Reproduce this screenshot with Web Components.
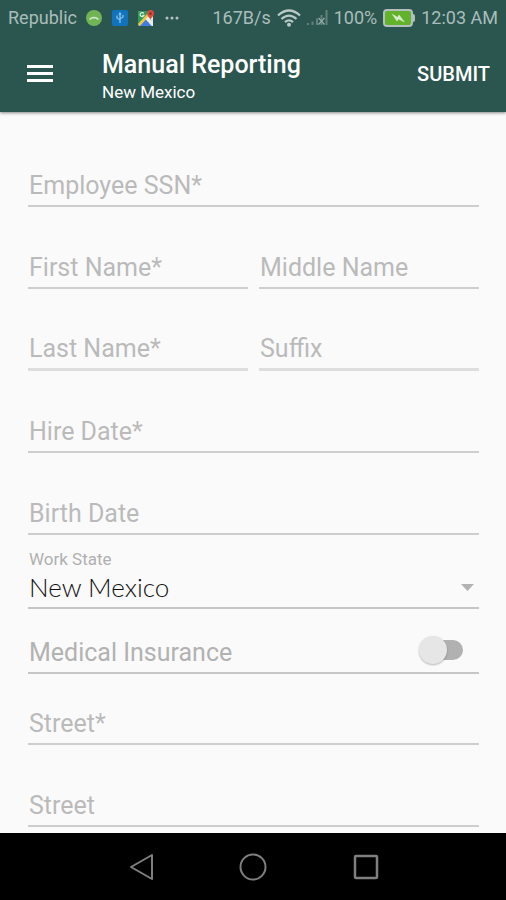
<!DOCTYPE html>
<html lang="en">
<head>
<meta charset="utf-8">
<meta name="viewport" content="width=device-width, initial-scale=1">
<title>Manual Reporting</title>
<style>
  body { margin: 0; background: #fafafa; font-family: Roboto, "Liberation Sans", sans-serif; }
</style>
</head>
<body>
<report-screen></report-screen>
<script>
const define = (name, html, setup) => {
  const template = document.createElement('template');
  template.innerHTML = html;
  customElements.define(name, class extends HTMLElement {
    constructor() {
      super();
      this.attachShadow({ mode: 'open' }).append(template.content.cloneNode(true));
    }
    connectedCallback() { if (setup) setup(this, this.shadowRoot); }
  });
};

define('status-bar', `
<style>
  :host { display: flex; justify-content: space-between; align-items: center; height: 36px;
    padding: 0 8px; color: #aabdba; font-size: 18px; line-height: 24px; white-space: nowrap; }
  .group { display: flex; align-items: center; gap: 9px; }
  .right { gap: 6px; }
  svg { display: block; flex: none; }
</style>
<div class="group">
  <span>Republic</span>
  <svg width="16" height="16" viewBox="0 0 16 16" aria-hidden="true">
    <circle cx="8" cy="8" r="8" fill="#70b456"/>
    <path d="M3 9.500C4.500 5.800 11.500 5.800 13 9.500L11 9.800 10 8.400H6L5 9.800Z" fill="#d5ead0"/>
  </svg>
  <svg width="18" height="16" viewBox="0 0 18 16" aria-hidden="true">
    <rect x="1" width="16" height="16" rx="2" fill="#0f73bd"/>
    <path d="M9 3.500V13M6 5.500V8L9 10M12 5V7L9 9M7.800 4.500L9 3 10.200 4.500" fill="none" stroke="#86bde5" stroke-width="1.400"/>
  </svg>
  <svg width="17" height="17" viewBox="0 0 17 17" aria-hidden="true">
    <rect y="1" width="15" height="15" rx="2" fill="#e4e6e2"/>
    <path d="M0 3Q0 1 2 1H12L1 15Q0 15 0 13Z" fill="#2f9b59"/>
    <path d="M1 16L7.500 9 14 16Z" fill="#3f7de0"/>
    <path d="M0 14L9 4 11 6 2 16Z" fill="#f0c843"/>
    <path d="M7.500 9L9.500 7 15 13V16H14Z" fill="#eceeec"/>
    <path d="M5.800 3.500A2 2 0 1 0 6 5.300H4.300" fill="none" stroke="#e3f0e6" stroke-width="1.200"/>
    <path d="M12.500 10.500C12.500 7.800 9 6.500 9 3.600A3.500 3.500 0 0 1 16 3.600C16 6.500 12.500 7.800 12.500 10.500Z" fill="#d94b3f"/>
    <circle cx="12.500" cy="3.600" r="1.300" fill="#8c2c26"/>
  </svg>
  <svg width="16" height="4" viewBox="0 0 16 4" aria-hidden="true" fill="#b3c4c1">
    <circle cx="3" cy="2" r="1.500"/><circle cx="8" cy="2" r="1.500"/><circle cx="13" cy="2" r="1.500"/>
  </svg>
</div>
<div class="group right">
  <span>167B/s</span>
  <svg width="24" height="18" viewBox="0 0 24 18" aria-hidden="true" fill="none" stroke="#b9c9c6" stroke-width="2.300">
    <path d="M1 6.500Q12-3.500 23 6.500M4.500 10Q12 3.200 19.500 10M8 13.200Q12 9.500 16 13.200"/>
    <circle cx="12" cy="15.700" r="2" fill="#b9c9c6" stroke="none"/>
  </svg>
  <svg width="21" height="16" viewBox="0 0 21 16" aria-hidden="true" fill="#64827d">
    <path d="M0 13H2V15H0ZM4.500 11.500H6.500V15H4.500ZM9 8.500H11V15H9ZM13.500 5H15.500V15H13.500ZM18.500 0H20.500V15H18.500Z"/>
    <path d="M11.500 8L17.500 14.500M17.500 8L11.500 14.500" stroke="#8ea6a2" stroke-width="1.400"/>
  </svg>
  <span>100%</span>
  <svg width="32" height="18" viewBox="0 0 32 18" aria-hidden="true">
    <rect x="1" y="1" width="28" height="16" rx="3" fill="#63b22c" stroke="#b3bfbc" stroke-width="2"/>
    <path d="M30 5Q32 5 32 7V11Q32 13 30 13Z" fill="#b3bfbc"/>
    <path d="M8.500 4.500L14.500 8 16 5.500 22 13.500 15.500 10.200 14 12.500Z" fill="#d6edc9"/>
  </svg>
  <span>12:03 AM</span>
</div>`);

define('app-toolbar', `
<style>
  :host { display: flex; align-items: center; height: 76px; padding: 0 16px 0 26px; color: #fff; }
  button { border: 0; padding: 0; background: none; color: inherit; font: inherit; cursor: pointer; }
  svg { display: block; }
  .titles { flex: 1; margin-left: 48px; padding-top: 8px; }
  h1, p { margin: 0; font-weight: 500; }
  h1 { font-size: 25px; line-height: 28px; }
  p { font-size: 17px; line-height: 26px; font-weight: 400; }
  .submit { font-size: 20px; line-height: 28px; font-weight: 500; }
</style>
<button aria-label="Open menu">
  <svg width="28" height="22" viewBox="0 0 28 22"><path d="M1 2H27V5H1ZM1 9H27V12H1ZM1 16H27V19H1Z" fill="#fff"/></svg>
</button>
<div class="titles"><h1><slot></slot></h1><p><slot name="subtitle"></slot></p></div>
<button class="submit" type="submit">SUBMIT</button>`);

define('text-field', `
<style>
  :host { display: grid; align-content: end; height: var(--row, 82px); box-sizing: border-box;
    border-bottom: var(--rule, 2px solid #cecece); min-width: 0; }
  input, label { grid-area: 1 / 1; font-size: 25px; line-height: 32px; height: 32px; margin-bottom: 3px; }
  input { width: 100%; box-sizing: border-box; border: 0; padding: 0 1px; outline: 0; background: none;
    color: #222; font-family: inherit; }
  label { padding-left: 1px; color: #bababa; pointer-events: none; white-space: nowrap; }
  input:not(:placeholder-shown) + label { font-size: 16px; margin-bottom: 36px; }
</style>
<input id="box" type="text" placeholder=" "><label for="box"></label>`,
(host, root) => { root.querySelector('label').textContent = host.getAttribute('label'); });

define('select-field', `
<style>
  :host { display: grid; align-content: end; height: 74px; box-sizing: border-box; border-bottom: 2px solid #c6c6c6; }
  label { padding-left: 1px; color: #b0b0b0; font-size: 17px; line-height: 20px; }
  .line { display: grid; align-items: center; margin-bottom: 2px; }
  select, svg { grid-area: 1 / 1; }
  select { appearance: none; width: 100%; border: 0; padding: 0 1px; height: 36px; outline: 0; background: none;
    color: #111; font-family: Lato, sans-serif; font-weight: 300; font-size: 26px; line-height: 36px; }
  svg { justify-self: end; margin-right: 5px; pointer-events: none; }
</style>
<label for="box">Work State</label>
<div class="line">
  <select id="box"><option>New Mexico</option></select>
  <svg width="13" height="7" viewBox="0 0 13 7" aria-hidden="true"><path d="M0 0H13L6.500 7Z" fill="#b2b2b2"/></svg>
</div>`);

define('switch-field', `
<style>
  :host { display: flex; justify-content: space-between; align-items: flex-end; height: 65px;
    box-sizing: border-box; border-bottom: 2px solid #c6c6c6; }
  label { padding-left: 1px; color: #b2b2b2; font-size: 25px; line-height: 32px; margin-bottom: 3px; }
  input { appearance: none; display: flex; align-items: center; width: 44px; height: 20px; border-radius: 10px;
    margin: 0 16px 12px 0; cursor: pointer;
    background: linear-gradient(#b1b1b1, #b1b1b1) right / 34px 20px no-repeat; }
  input::before { content: ""; flex: none; width: 28px; height: 28px; border-radius: 50%;
    background: #e6e6e6; box-shadow: 0 1px 2px #0004; }
  input:checked { justify-content: flex-end; }
</style>
<label for="box">Medical Insurance</label><input id="box" type="checkbox" role="switch">`);

define('system-nav', `
<style>
  :host { display: flex; justify-content: center; align-items: center; gap: 84px; height: 67px; background: #000; }
  button { border: 0; padding: 0; background: none; cursor: pointer; }
  svg { display: block; fill: none; stroke: #7f7f7f; stroke-width: 2; stroke-linejoin: round; }
</style>
<button aria-label="Back"><svg width="28" height="28" viewBox="0 0 28 28"><path d="M4 14L25 2V26Z"/></svg></button>
<button aria-label="Home"><svg width="28" height="28" viewBox="0 0 28 28"><circle cx="14" cy="14" r="12.500"/></svg></button>
<button aria-label="Recent apps"><svg width="28" height="28" viewBox="0 0 28 28"><rect x="4" y="3" width="22" height="22" rx="1" stroke-width="2.500"/></svg></button>`);

define('report-screen', `
<style>
  :host { display: flex; flex-direction: column; min-height: 100vh; }
  header { background: #2b5650; box-shadow: 0 1px 3px #0007; }
  form { flex: 1; padding: 13px 27px 6px 28px; }
  .pair { display: grid; grid-template-columns: 1fr 1fr; gap: 11px; }
  .soft { --rule: 3px solid #dedede; }
  .close { --row: 71px; }
</style>
<header>
  <status-bar></status-bar>
  <app-toolbar>Manual Reporting<span slot="subtitle">New Mexico</span></app-toolbar>
</header>
<form>
  <text-field label="Employee SSN*"></text-field>
  <div class="pair"><text-field label="First Name*"></text-field><text-field label="Middle Name"></text-field></div>
  <div class="pair"><text-field class="soft" label="Last Name*"></text-field><text-field class="soft" label="Suffix"></text-field></div>
  <text-field label="Hire Date*"></text-field>
  <text-field label="Birth Date"></text-field>
  <select-field></select-field>
  <switch-field></switch-field>
  <text-field class="close" label="Street*"></text-field>
  <text-field label="Street"></text-field>
</form>
<system-nav></system-nav>`);
</script>
</body>
</html>
